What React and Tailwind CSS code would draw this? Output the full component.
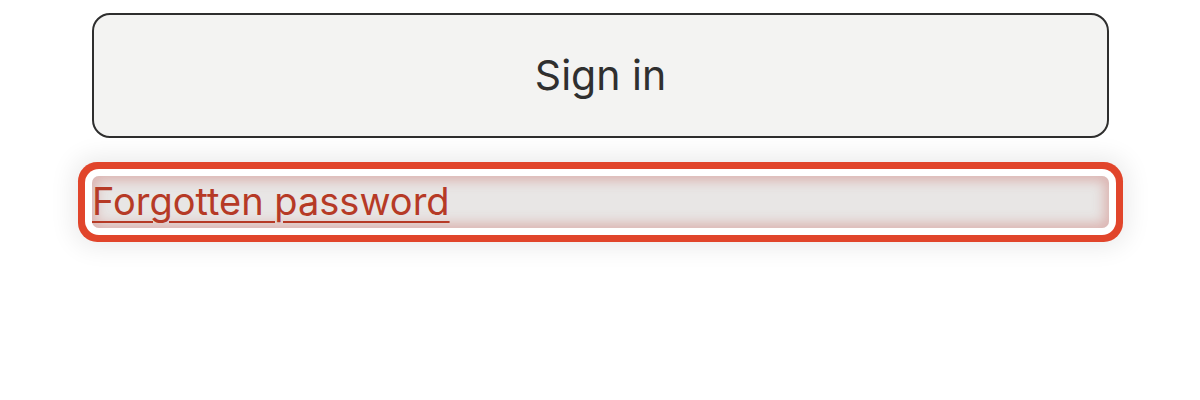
export default function App() {
  return (
    <div className="w-[1200px] h-[400px] bg-white px-[92px] pt-[13px] font-['Inter',sans-serif]">
      <button
        type="button"
        className="w-[1017px] h-[125px] rounded-[18px] border-2 border-[#2e2e2e] bg-[#f3f3f2] text-[41px] font-normal text-[#2f2f2f] flex items-center justify-center"
      >
        Sign in
      </button>
      <div className="mt-[38px]">
        <a
          href="#"
          className="block w-[1017px] h-[52px] rounded-[7px] bg-[#e8e6e5] text-[38px] leading-[50px] text-[#b63a26] underline decoration-[2px] underline-offset-[6px] shadow-[inset_0_0_12px_5px_rgba(218,175,172,0.9),0_0_0_7px_#ffffff,0_0_0_14px_#e1452b,0_0_26px_18px_rgba(0,0,0,0.09)]"
        >
          Forgotten password
        </a>
      </div>
    </div>
  );
}
